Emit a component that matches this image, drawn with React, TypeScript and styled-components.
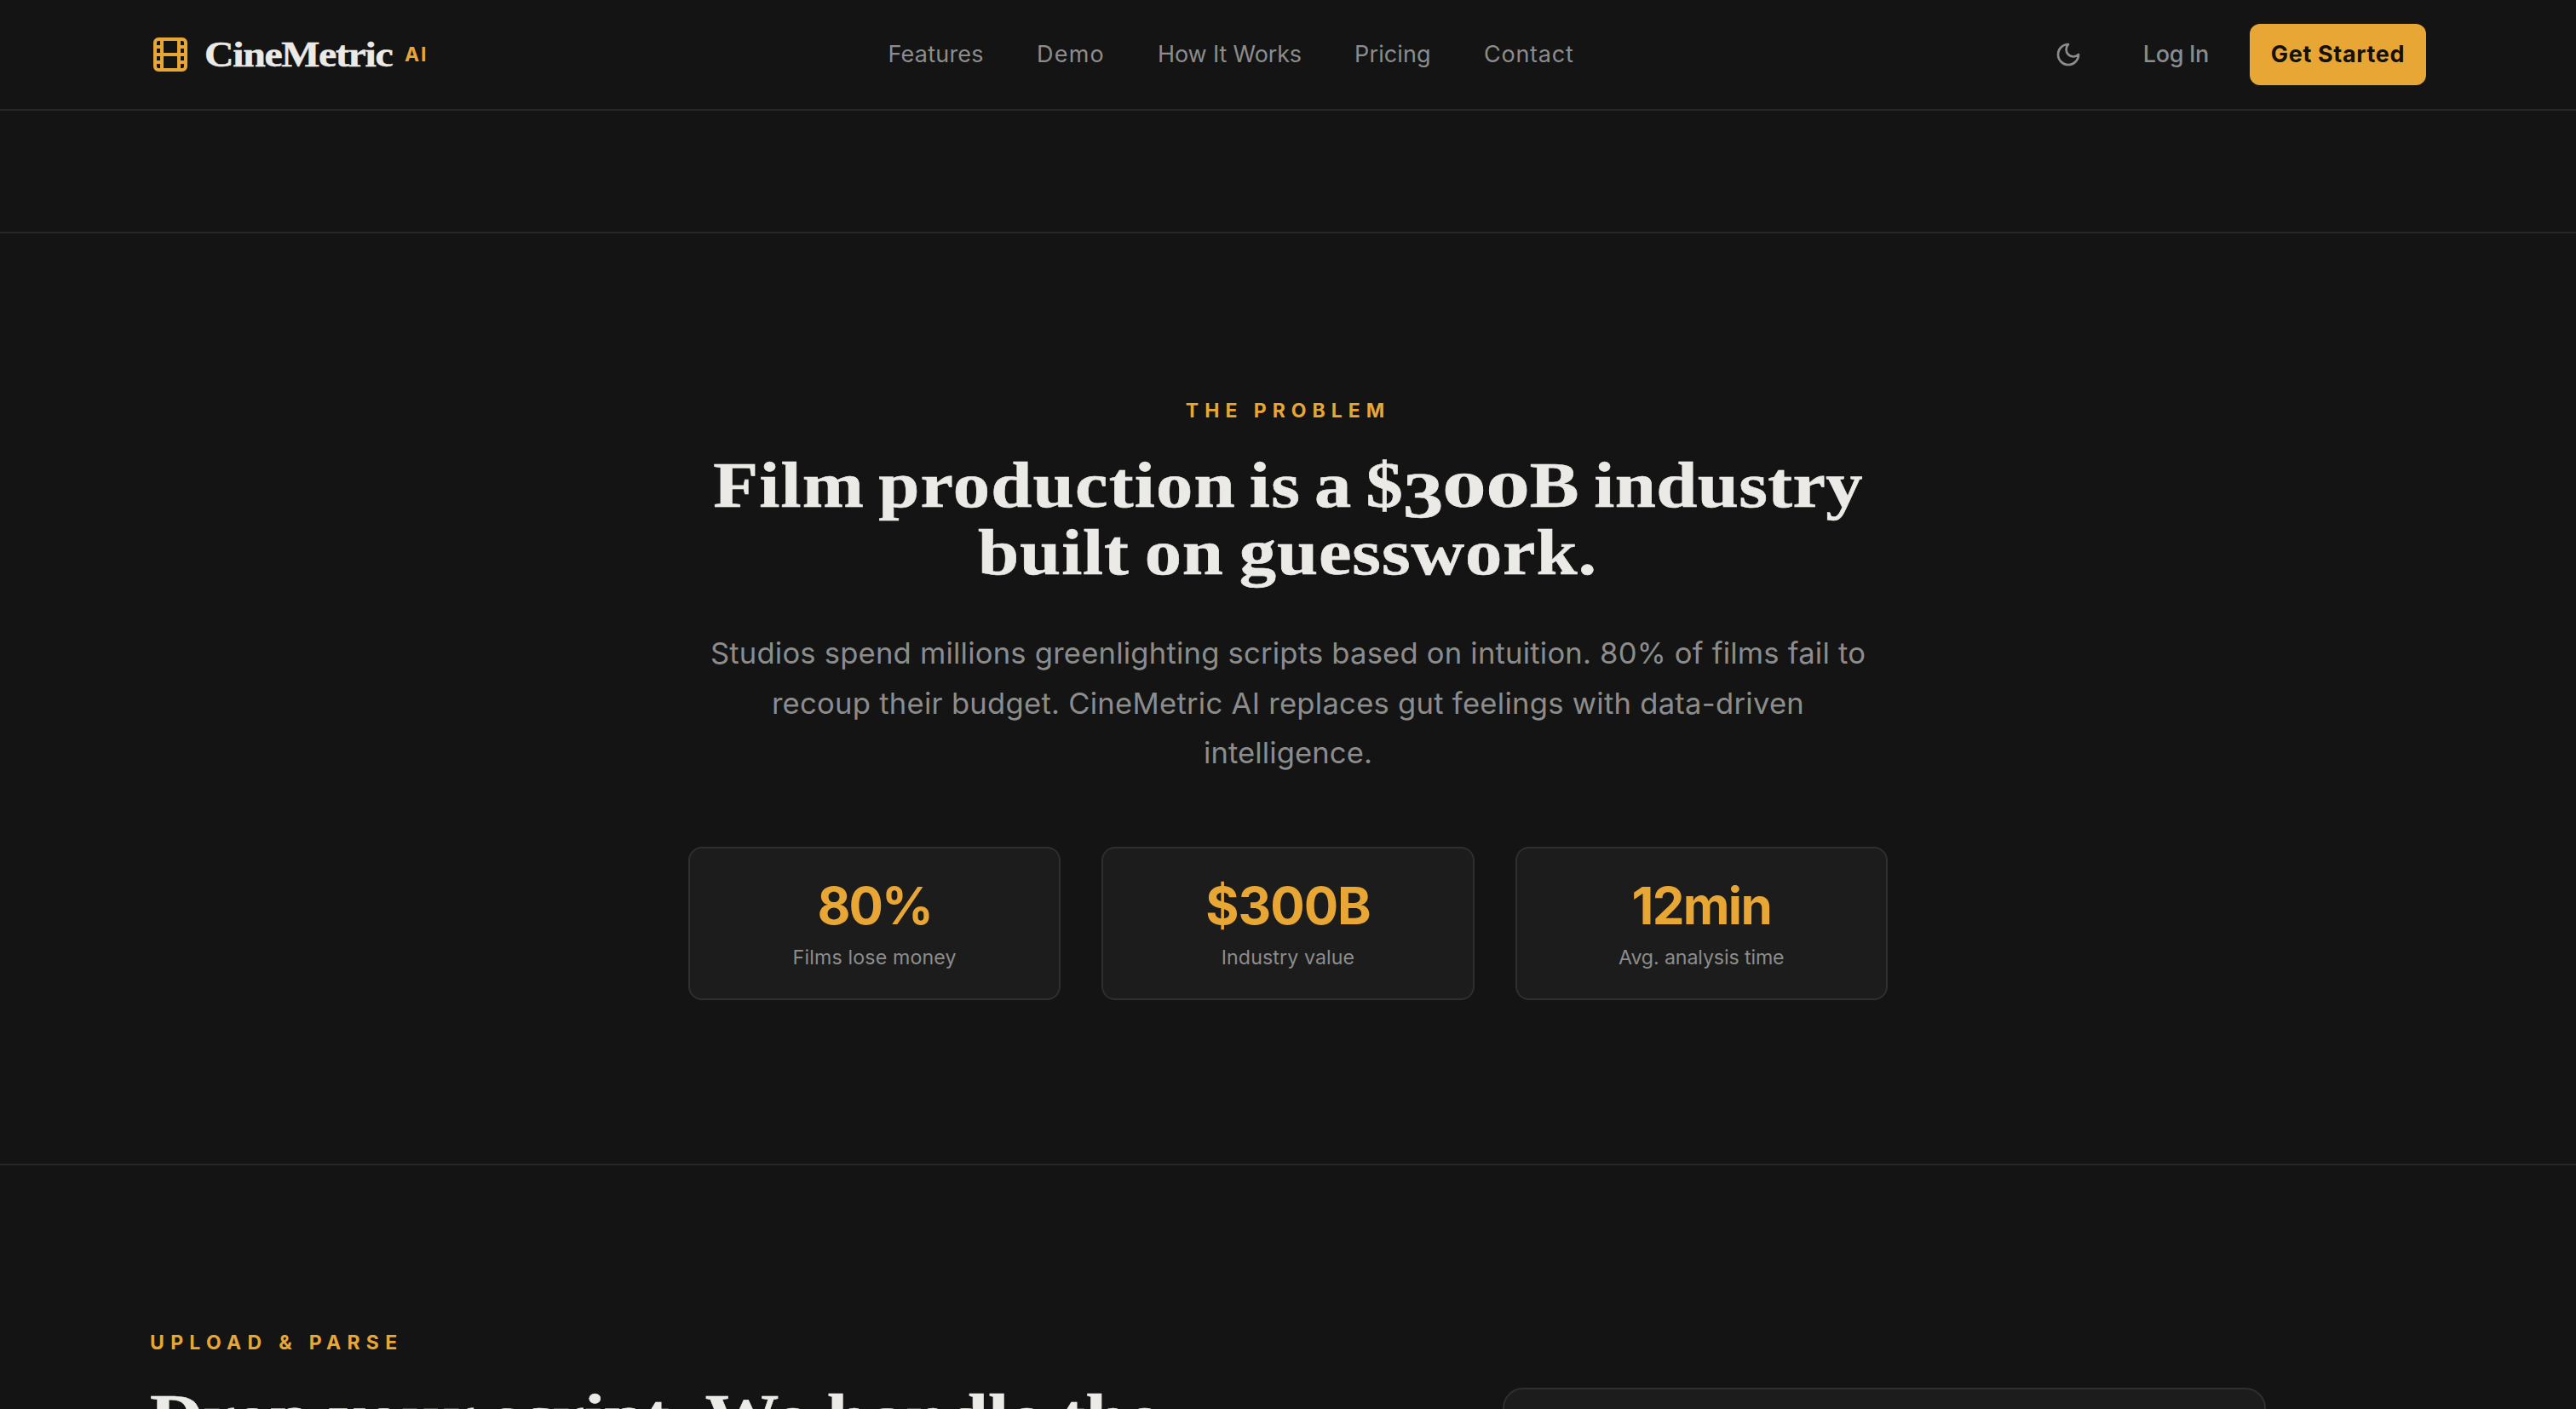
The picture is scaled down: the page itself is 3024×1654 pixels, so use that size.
import React from 'react';
import styled, { createGlobalStyle } from 'styled-components';
import { Film } from 'lucide-react';

const serif = '"Liberation Serif", Georgia, serif';
const sans = 'Inter, "Liberation Sans", sans-serif';
const c = {
  bg: '#141414',
  card: '#1c1c1c',
  line: '#272727',
  cardLine: '#2f2f2f',
  text: '#ebeae7',
  muted: '#8c8c8c',
  amber: '#e8a634',
  ink: '#171105',
};

const GlobalStyle = createGlobalStyle`
  * { box-sizing: border-box; }
  html, body { margin: 0; height: 1654px; overflow: hidden; background: ${c.bg}; }
  body { font-family: ${sans}; color: ${c.text}; }
  h1, h2, p { margin: 0; }
`;

const Page = styled.div`
  display: flex;
  flex-direction: column;
  height: 1654px;
  overflow: hidden;
`;

/* Header */
const Header = styled.header`
  flex: none;
  height: 130px;
  padding: 0 176px;
  border-bottom: 2px solid ${c.line};
  display: flex;
  justify-content: space-between;
  align-items: center;
`;
const Brand = styled.div`
  display: flex;
  align-items: center;
  gap: 16px;
  svg { color: ${c.amber}; }
`;
const BrandName = styled.span`
  width: 219px;
  font: 700 42px/56px ${serif};
  letter-spacing: -1.2px;
  -webkit-text-stroke: 0.5px;
  transform: scaleX(1.14);
  transform-origin: left;
  white-space: nowrap;
`;
const BrandTag = styled.span`
  font: 700 23px/32px ${sans};
  letter-spacing: 1.8px;
  color: ${c.amber};
`;
const Nav = styled.nav`
  display: flex;
  gap: 62.2px;
`;
const NavLink = styled.a<{ $track: number }>`
  font: 400 27px/40px ${sans};
  letter-spacing: ${p => p.$track}px;
  color: ${c.muted};
`;
const Actions = styled.div`
  display: flex;
  align-items: center;
`;
const IconButton = styled.button`
  width: 80px;
  height: 72px;
  margin-right: 48px;
  padding: 0;
  border: 0;
  background: none;
  color: ${c.muted};
  display: flex;
  align-items: center;
  justify-content: center;
`;
const TextLink = styled.a`
  margin-right: 48px;
  font: 500 27px/40px ${sans};
  letter-spacing: -0.3px;
  color: ${c.muted};
`;
const Cta = styled.button`
  width: 207px;
  height: 72px;
  padding: 0;
  border: 0;
  border-radius: 12px;
  background: ${c.amber};
  color: ${c.ink};
  font: 700 27px/40px ${sans};
  letter-spacing: 0.65px;
  white-space: nowrap;
`;

/* Sections */
const Strip = styled.div`
  flex: none;
  height: 144px;
  border-bottom: 2px solid ${c.line};
`;
const Problem = styled.section`
  flex: none;
  height: 1094px;
  padding-top: 192px;
  border-bottom: 2px solid ${c.line};
  display: flex;
  flex-direction: column;
  align-items: center;
`;
const Eyebrow = styled.p<{ $track?: number }>`
  font: 700 23px/32px ${sans};
  letter-spacing: ${p => p.$track ?? 7}px;
  color: ${c.amber};
  text-transform: uppercase;
  white-space: nowrap;
`;
const Title = styled.h2<{ $left?: boolean }>`
  margin-top: 32px;
  font: 700 76px/79.2px ${serif};
  -webkit-text-stroke: 0.6px;
  text-align: ${p => (p.$left ? 'left' : 'center')};
  transform: scaleX(1.14);
  transform-origin: ${p => (p.$left ? 'left' : 'center')};
  white-space: nowrap;
`;
const Line = styled.span<{ $indent?: number }>`
  display: block;
  height: 79.2px;
  padding-left: ${p => p.$indent ?? 0}px;
`;
const Run = styled.span<{ $track: number; $word?: number }>`
  letter-spacing: ${p => p.$track}px;
  word-spacing: ${p => p.$word ?? 0}px;
`;
/* Old-style figure: x-height zeros, descending three */
const Digit = styled.span<{ $w: number; $size: number; $drop?: number; $stretch: number }>`
  display: inline-block;
  width: ${p => p.$w}px;
  font-size: ${p => p.$size}px;
  line-height: 60px;
  text-align: center;
  transform: translateY(${p => p.$drop ?? 0}px) scaleX(${p => p.$stretch});
`;
const Lead = styled.p`
  margin-top: 49px;
  font: 400 34.6px/58.5px ${sans};
  color: ${c.muted};
  text-align: center;
`;
const LeadLine = styled.span<{ $track: number }>`
  display: block;
  letter-spacing: ${p => p.$track}px;
`;

const Stats = styled.div`
  margin-top: 81px;
  width: 1408px;
  display: grid;
  grid-template-columns: repeat(3, 1fr);
  gap: 48px;
`;
const Stat = styled.div`
  height: 180px;
  padding-top: 31px;
  border: 2px solid ${c.cardLine};
  border-radius: 16px;
  background: ${c.card};
  display: flex;
  flex-direction: column;
  align-items: center;
`;
const Value = styled.div<{ $track: number }>`
  font: 700 60px/72px ${sans};
  letter-spacing: ${p => p.$track}px;
  color: ${c.amber};
`;
const Caption = styled.div<{ $track: number }>`
  margin-top: 9px;
  font: 400 23.2px/32px ${sans};
  letter-spacing: ${p => p.$track}px;
  color: ${c.muted};
`;

const Upload = styled.section`
  flex: 1;
  min-height: 0;
  padding: 192px 176px 0;
  display: grid;
  grid-template-columns: 1fr 1fr;
  column-gap: 128px;
`;
const Preview = styled.div`
  width: 896px;
  height: 600px;
  margin: 69px auto 0;
  border: 2px solid ${c.cardLine};
  border-radius: 24px;
  background: ${c.card};
`;

const links = [
  { name: 'Features', track: 0.24 },
  { name: 'Demo', track: 1.2 },
  { name: 'How It Works', track: -0.15 },
  { name: 'Pricing', track: 0.12 },
  { name: 'Contact', track: 0.76 },
];

const stats = [
  { value: '80%', valueTrack: -2, label: 'Films lose money', labelTrack: 0.15 },
  { value: '$300B', valueTrack: -1, label: 'Industry value', labelTrack: 0.1 },
  { value: '12min', valueTrack: -1.7, label: 'Avg. analysis time', labelTrack: -0.12 },
];

function MoonIcon() {
  return (
    <svg width="32" height="32" viewBox="0 0 24 24" fill="none" stroke="currentColor" strokeWidth="2" strokeLinecap="round" strokeLinejoin="round">
      <path d="M12 3a6 6 0 0 0 9 9 9 9 0 1 1-9-9Z" />
    </svg>
  );
}

export default function App() {
  return (
    <>
      <GlobalStyle />
      <Page>
        <Header>
          <Brand>
            <Film size={48} strokeWidth={2} />
            <BrandName>CineMetric</BrandName>
            <BrandTag>AI</BrandTag>
          </Brand>
          <Nav>
            {links.map(l => (
              <NavLink key={l.name} $track={l.track}>{l.name}</NavLink>
            ))}
          </Nav>
          <Actions>
            <IconButton aria-label="Theme"><MoonIcon /></IconButton>
            <TextLink>Log In</TextLink>
            <Cta>Get Started</Cta>
          </Actions>
        </Header>
        <Strip />
        <Problem>
          <Eyebrow>The Problem</Eyebrow>
          <Title>
            <Line $indent={1}>
              <Run $track={1.05} $word={-6}>Film production is a $</Run>
              <Digit $w={40.1} $size={76} $drop={12} $stretch={1.1}>3</Digit>
              <Digit $w={44.7} $size={60} $stretch={1.5}>0</Digit>
              <Digit $w={44.7} $size={60} $stretch={1.5}>0</Digit>
              <Run $track={0.3} $word={-4}>B industry</Run>
            </Line>
            <Line><Run $track={0.75} $word={-4}>built on guesswork.</Run></Line>
          </Title>
          <Lead>
            <LeadLine $track={0.21}>Studios spend millions greenlighting scripts based on intuition. 80% of films fail to</LeadLine>
            <LeadLine $track={0.27}>recoup their budget. CineMetric AI replaces gut feelings with data-driven</LeadLine>
            <LeadLine $track={0.1}>intelligence.</LeadLine>
          </Lead>
          <Stats>
            {stats.map(s => (
              <Stat key={s.value}>
                <Value $track={s.valueTrack}>{s.value}</Value>
                <Caption $track={s.labelTrack}>{s.label}</Caption>
              </Stat>
            ))}
          </Stats>
        </Problem>
        <Upload>
          <div>
            <Eyebrow $track={7.3}>Upload &amp; Parse</Eyebrow>
            <Title $left>
              <Line><Run $track={-0.45}>Drop your script. </Run><Run $track={0.3}>We handle the</Run></Line>
            </Title>
          </div>
          <Preview />
        </Upload>
      </Page>
    </>
  );
}
